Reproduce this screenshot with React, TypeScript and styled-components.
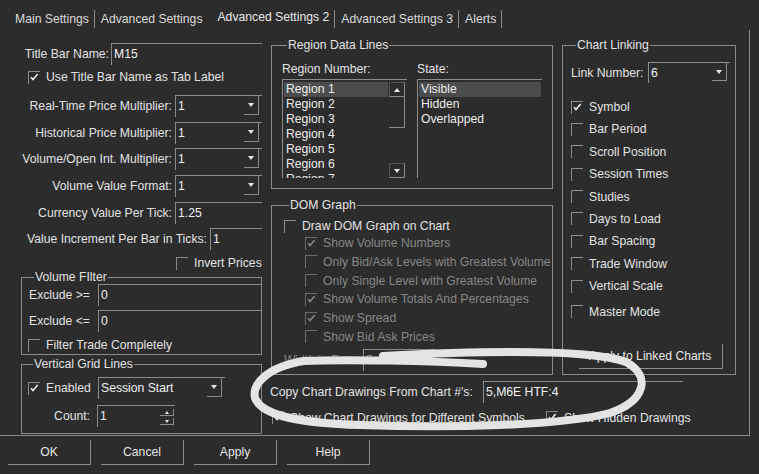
import React from "react";
import styled, { createGlobalStyle, css } from "styled-components";

// colours
const LINE = "#8b8b8b";
const TEXT = "#e2e2e2";
const DIM = "#878787";
const BG = "#2c2c2c";

const GlobalStyle = createGlobalStyle`
  * { box-sizing: border-box; }
  html, body { margin: 0; padding: 0; background: ${BG}; }
  body {
    font-family: "Liberation Sans", Arial, sans-serif;
    font-size: 12.2px;
    color: ${TEXT};
  }
`;

const Dialog = styled.div`
  position: relative;
  width: 759px;
  height: 474px;
  overflow: hidden;
  background: ${BG};
`;

// tabs
const TabBar = styled.div`
  display: flex;
  align-items: flex-start;
  height: 30px;
  padding-left: 9px;
`;

const Tab = styled.div<{ $sep?: boolean; $active?: boolean }>`
  margin-top: 10px;
  height: 18px;
  padding: 1px 5px 0 6px;
  line-height: 17px;
  white-space: nowrap;
  color: #dadada;
  ${(p) => p.$sep && css`border-right: 1px solid ${LINE};`}
  ${(p) =>
    p.$active &&
    css`
      padding: 0 5px 0 10px;
      line-height: 15px;
      color: #e8e8e8;
    `}
`;

// page
const Page = styled.div`
  display: flex;
  height: 406px;
  margin-right: 9px;
  border-right: 1px solid ${LINE};
  border-bottom: 1px solid ${LINE};
`;

const LeftCol = styled.div`
  display: flex;
  flex-direction: column;
  width: 241px;
  margin-left: 21px;
  padding-top: 13px;
`;

const RightArea = styled.div`
  display: flex;
  flex-direction: column;
  width: 465px;
  margin-left: 9px;
  padding-top: 8px;
`;

const TopRow = styled.div`
  display: flex;
  align-items: stretch;
  gap: 9px;
`;

const MidCol = styled.div`
  display: flex;
  flex-direction: column;
  width: 282px;
`;

// field rows
const FieldRow = styled.div<{ $mt?: number; $h?: number }>`
  display: flex;
  align-items: center;
  flex: none;
  height: ${(p) => p.$h ?? 22}px;
  margin-top: ${(p) => p.$mt ?? 0}px;
`;

const Label = styled.div<{ $w: number; $gap?: number; $left?: boolean; $dim?: boolean }>`
  flex: none;
  width: ${(p) => p.$w}px;
  margin-right: ${(p) => p.$gap ?? 0}px;
  text-align: ${(p) => (p.$left ? "left" : "right")};
  white-space: nowrap;
  color: ${(p) => (p.$dim ? DIM : TEXT)};
`;

const TextBox = styled.div<{ $w?: number; $dim?: boolean }>`
  ${(p) => (p.$w ? css`width: ${p.$w}px; flex: none;` : css`flex: 1;`)}
  height: 22px;
  border-top: 1px solid ${LINE};
  border-left: 1px solid ${LINE};
  padding-left: 2px;
  line-height: 21px;
  white-space: nowrap;
  overflow: hidden;
  color: ${(p) => (p.$dim ? DIM : "#f0f0f0")};
`;

const DropBox = styled.div<{ $w?: number; $h?: number }>`
  ${(p) => (p.$w ? css`width: ${p.$w}px; flex: none;` : css`flex: 1;`)}
  display: flex;
  align-items: flex-start;
  height: ${(p) => p.$h ?? 22}px;
  border-top: 1px solid ${LINE};
  border-left: 1px solid ${LINE};
`;

const DropValue = styled.div`
  flex: 1;
  padding-left: 2px;
  line-height: 21px;
  white-space: nowrap;
  color: #f0f0f0;
`;

const ArrowBtn = styled.div<{ $w?: number; $h?: number; $mr?: number }>`
  display: flex;
  align-items: center;
  justify-content: center;
  flex: none;
  width: ${(p) => p.$w ?? 15}px;
  height: ${(p) => p.$h ?? 19}px;
  margin-right: ${(p) => p.$mr ?? 3}px;
  border-right: 1px solid ${LINE};
  border-bottom: 1px solid ${LINE};
`;

const Tri = styled.div<{ $up?: boolean; $size?: number }>`
  width: 0;
  height: 0;
  border-left: ${(p) => (p.$size ?? 7) / 2}px solid transparent;
  border-right: ${(p) => (p.$size ?? 7) / 2}px solid transparent;
  ${(p) =>
    p.$up
      ? css`border-bottom: ${Math.round((p.$size ?? 7) * 0.57)}px solid #e8e8e8;`
      : css`border-top: ${Math.round((p.$size ?? 7) * 0.57)}px solid #e8e8e8;`}
`;

const SpinStack = styled.div`
  display: flex;
  flex-direction: column;
  gap: 2px;
  margin: 3px 1px 0 0;
`;

// checkboxes
const CheckRow = styled.div<{ $mt?: number; $ml?: number; $dim?: boolean; $w?: number }>`
  display: flex;
  align-items: center;
  flex: none;
  height: 14px;
  margin-top: ${(p) => p.$mt ?? 0}px;
  margin-left: ${(p) => p.$ml ?? 0}px;
  white-space: nowrap;
  color: ${(p) => (p.$dim ? DIM : TEXT)};
  ${(p) => p.$w && css`width: ${p.$w}px;`}
`;

const Box = styled.div<{ $dim?: boolean }>`
  flex: none;
  width: 12px;
  height: 13px;
  margin-right: 6px;
  border-top: 1px solid ${(p) => (p.$dim ? "#6c6c6c" : LINE)};
  border-left: 1px solid ${(p) => (p.$dim ? "#6c6c6c" : LINE)};
`;

const Check = ({ on, dim, label }: { on?: boolean; dim?: boolean; label: string }) => (
  <>
    <Box $dim={dim}>
      {on && (
        <svg width="11" height="12" viewBox="0 0 11 12">
          <path d="M2 5.2 L4 7.6 L8.6 2" fill="none" stroke={dim ? "#8a8a8a" : "#f2f2f2"} strokeWidth="1.5" />
        </svg>
      )}
    </Box>
    <span>{label}</span>
  </>
);

// group boxes
const Group = styled.fieldset<{ $pad: string; $mt?: number; $w?: number; $flex?: boolean }>`
  margin: ${(p) => p.$mt ?? 0}px 0 0 0;
  padding: ${(p) => p.$pad};
  border: 1px solid ${LINE};
  min-width: 0;
  ${(p) => p.$w && css`width: ${p.$w}px;`}
  ${(p) =>
    p.$flex &&
    css`
      display: flex;
      flex-direction: column;
    `}
`;

const Legend = styled.legend<{ $lh?: number }>`
  margin-left: 5px;
  padding: 0 1px;
  line-height: ${(p) => p.$lh ?? 14}px;
  color: ${TEXT};
`;

// list boxes
const ListRow = styled.div`
  display: flex;
  gap: 10px;
`;

const ListCol = styled.div`
  display: flex;
  flex-direction: column;
  width: 125px;
`;

const ListBox = styled.div`
  display: flex;
  width: 125px;
  height: 99px;
  margin-top: 3px;
  border-top: 1px solid ${LINE};
  border-left: 1px solid ${LINE};
  overflow: hidden;
`;

const ListItems = styled.div`
  flex: 1;
  padding: 2px 1px 0 1px;
`;

const ListItem = styled.div<{ $sel?: boolean }>`
  height: 15px;
  line-height: 15px;
  padding-left: 2px;
  white-space: nowrap;
  color: #ececec;
  ${(p) => p.$sel && css`background: #4c4c4c;`}
`;

const ScrollBar = styled.div`
  display: flex;
  flex-direction: column;
  flex: none;
  width: 16px;
  margin: 2px 2px 0 0;
  height: 96px;
`;

const ScrollBtn = styled.div`
  display: flex;
  align-items: center;
  justify-content: center;
  height: 15px;
  border-right: 1px solid ${LINE};
  border-bottom: 1px solid ${LINE};
  border-left: 1px solid #555;
  border-top: 1px solid #555;
`;

const Thumb = styled.div`
  height: 31px;
  border-right: 1px solid ${LINE};
  border-bottom: 1px solid ${LINE};
  margin-bottom: auto;
`;

// buttons
const ButtonBar = styled.div`
  display: flex;
  gap: 10px;
  padding-left: 8px;
  margin-top: 4px;
`;

const Btn = styled.div<{ $w?: number }>`
  display: flex;
  align-items: center;
  justify-content: center;
  flex: none;
  width: ${(p) => p.$w ?? 83}px;
  height: 25px;
  border-right: 1px solid ${LINE};
  border-bottom: 1px solid ${LINE};
  color: #e6e6e6;
`;

const LinkButton = styled(Btn)`
  margin-top: auto;
  align-self: center;
`;

const Scribble = styled.svg`
  position: absolute;
  left: 0;
  top: 0;
  pointer-events: none;
`;

const Dropdown = ({ value, w, h }: { value: string; w?: number; h?: number }) => (
  <DropBox $w={w} $h={h}>
    <DropValue>{value}</DropValue>
    <ArrowBtn $h={h ? h - 3 : 19}>
      <Tri />
    </ArrowBtn>
  </DropBox>
);

const regions = ["Region 1", "Region 2", "Region 3", "Region 4", "Region 5", "Region 6", "Region 7"];
const states = ["Visible", "Hidden", "Overlapped"];

const domOptions: [string, boolean][] = [
  ["Show Volume Numbers", true],
  ["Only Bid/Ask Levels with Greatest Volume", false],
  ["Only Single Level with Greatest Volume", false],
  ["Show Volume Totals And Percentages", true],
  ["Show Spread", true],
  ["Show Bid  Ask Prices", false],
];

const linkOptions: [string, boolean][] = [
  ["Symbol", true],
  ["Bar Period", false],
  ["Scroll Position", false],
  ["Session Times", false],
  ["Studies", false],
  ["Days to Load", false],
  ["Bar Spacing", false],
  ["Trade Window", false],
  ["Vertical Scale", false],
  ["Master Mode", false],
];

const multipliers = [
  "Real-Time Price Multiplier:",
  "Historical Price Multiplier:",
  "Volume/Open Int. Multiplier:",
  "Volume Value Format:",
];

export default function App() {
  return (
    <>
      <GlobalStyle />
      <Dialog>
        <TabBar>
          <Tab $sep>Main Settings</Tab>
          <Tab>Advanced Settings</Tab>
          <Tab $sep $active>Advanced Settings 2</Tab>
          <Tab $sep>Advanced Settings 3</Tab>
          <Tab $sep>Alerts</Tab>
        </TabBar>

        <Page>
          <LeftCol>
            <FieldRow>
              <Label $w={88} $gap={2}>Title Bar Name:</Label>
              <TextBox>M15</TextBox>
            </FieldRow>
            <CheckRow $mt={5} $ml={7}>
              <Check on label="Use Title Bar Name as Tab Label" />
            </CheckRow>

            {multipliers.map((m, i) => (
              <FieldRow key={m} $mt={i === 0 ? 11 : 4.5}>
                <Label $w={151} $gap={3}>{m}</Label>
                <Dropdown value="1" />
              </FieldRow>
            ))}
            <FieldRow $mt={5}>
              <Label $w={151} $gap={3}>Currency Value Per Tick:</Label>
              <TextBox>1.25</TextBox>
            </FieldRow>
            <FieldRow $mt={4.5}>
              <Label $w={186} $gap={3}>Value Increment Per Bar in Ticks:</Label>
              <TextBox>1</TextBox>
            </FieldRow>
            <CheckRow $mt={6} $ml={155}>
              <Check label="Invert Prices" />
            </CheckRow>

            <Group $pad="0 0 2px 7px">
              <Legend $lh={14}>Volume FIlter</Legend>
              <FieldRow>
                <Label $w={69} $left>Exclude &gt;=</Label>
                <TextBox>0</TextBox>
              </FieldRow>
              <FieldRow $mt={4}>
                <Label $w={69} $left>Exclude &lt;=</Label>
                <TextBox>0</TextBox>
              </FieldRow>
              <CheckRow $mt={6} $ml={-1}>
                <Check label="Filter Trade Completely" />
              </CheckRow>
            </Group>

            <Group $pad="6px 0 6px 6px" $mt={2}>
              <Legend $lh={14}>Vertical Grid Lines</Legend>
              <FieldRow>
                <CheckRow $w={70}>
                  <Check on label="Enabled" />
                </CheckRow>
                <Dropdown value="Session Start" w={127} />
              </FieldRow>
              <FieldRow $mt={6}>
                <Label $w={69} $gap={0} style={{ paddingRight: 7 }}>Count:</Label>
                <DropBox $w={78}>
                  <DropValue>1</DropValue>
                  <SpinStack>
                    <ArrowBtn $w={14} $h={7} $mr={0}>
                      <Tri $up $size={5} />
                    </ArrowBtn>
                    <ArrowBtn $w={14} $h={7} $mr={0}>
                      <Tri $size={5} />
                    </ArrowBtn>
                  </SpinStack>
                </DropBox>
              </FieldRow>
            </Group>
          </LeftCol>

          <RightArea>
            <TopRow>
              <MidCol>
                <Group $pad="10px 10px 10px 10px">
                  <Legend>Region Data Lines</Legend>
                  <ListRow>
                    <ListCol>
                      <span>Region Number:</span>
                      <ListBox>
                        <ListItems>
                          {regions.map((r, i) => (
                            <ListItem key={r} $sel={i === 0}>{r}</ListItem>
                          ))}
                        </ListItems>
                        <ScrollBar>
                          <ScrollBtn>
                            <Tri $up $size={7} />
                          </ScrollBtn>
                          <Thumb />
                          <ScrollBtn>
                            <Tri $size={7} />
                          </ScrollBtn>
                        </ScrollBar>
                      </ListBox>
                    </ListCol>
                    <ListCol>
                      <span>State:</span>
                      <ListBox>
                        <ListItems>
                          {states.map((s, i) => (
                            <ListItem key={s} $sel={i === 0}>{s}</ListItem>
                          ))}
                        </ListItems>
                      </ListBox>
                    </ListCol>
                  </ListRow>
                </Group>

                <Group $pad="7px 0 3px 12px" $mt={9}>
                  <Legend>DOM Graph</Legend>
                  <CheckRow>
                    <Check label="Draw DOM Graph on Chart" />
                  </CheckRow>
                  {domOptions.map(([label, on], i) => (
                    <CheckRow key={label} $ml={21} $mt={i === 0 ? 3 : 4.8} $dim>
                      <Check on={on} dim label={label} />
                    </CheckRow>
                  ))}
                  <FieldRow $mt={5}>
                    <Label $w={79} $gap={0} $dim style={{ paddingRight: 6 }}>Width in Bars:</Label>
                    <TextBox $w={72} $dim>5</TextBox>
                  </FieldRow>
                </Group>
              </MidCol>

              <Group $pad="10px 5px 5px 8px" $w={174} $flex>
                <Legend>Chart Linking</Legend>
                <FieldRow $h={21}>
                  <Label $w={77} $left>Link Number:</Label>
                  <Dropdown value="6" h={21} />
                </FieldRow>
                {linkOptions.map(([label, on], i) => (
                  <CheckRow key={label} $mt={i === 0 ? 17 : i === 9 ? 11.5 : 8.4}>
                    <Check on={on} label={label} />
                  </CheckRow>
                ))}
                <LinkButton $w={144}>Apply to Linked Charts</LinkButton>
              </Group>
            </TopRow>

            <FieldRow $mt={6} style={{ marginLeft: -1 }}>
              <Label $w={213} $left>Copy Chart Drawings From Chart #'s:</Label>
              <TextBox $w={200}>5,M6E HTF:4</TextBox>
            </FieldRow>
            <FieldRow $h={14} $mt={8}>
              <CheckRow $ml={1} $w={274}>
                <Check on label="Show Chart Drawings for Different Symbols" />
              </CheckRow>
              <CheckRow>
                <Check on label="Show Hidden Drawings" />
              </CheckRow>
            </FieldRow>
          </RightArea>
        </Page>

        <ButtonBar>
          <Btn>OK</Btn>
          <Btn>Cancel</Btn>
          <Btn>Apply</Btn>
          <Btn>Help</Btn>
        </ButtonBar>

        <Scribble width="759" height="474" viewBox="0 0 759 474">
          <path
            d="M 483 364 C 430 361, 345 359, 304 361 C 266 367, 252 385, 255 398 C 262 416, 300 423, 360 425 C 450 428, 560 426, 610 413 C 645 401, 652 376, 626 362 C 592 350, 500 350, 383 356"
            fill="none"
            stroke="#e4e4e4"
            strokeWidth="8"
            strokeLinecap="round"
            strokeLinejoin="round"
          />
        </Scribble>
      </Dialog>
    </>
  );
}
